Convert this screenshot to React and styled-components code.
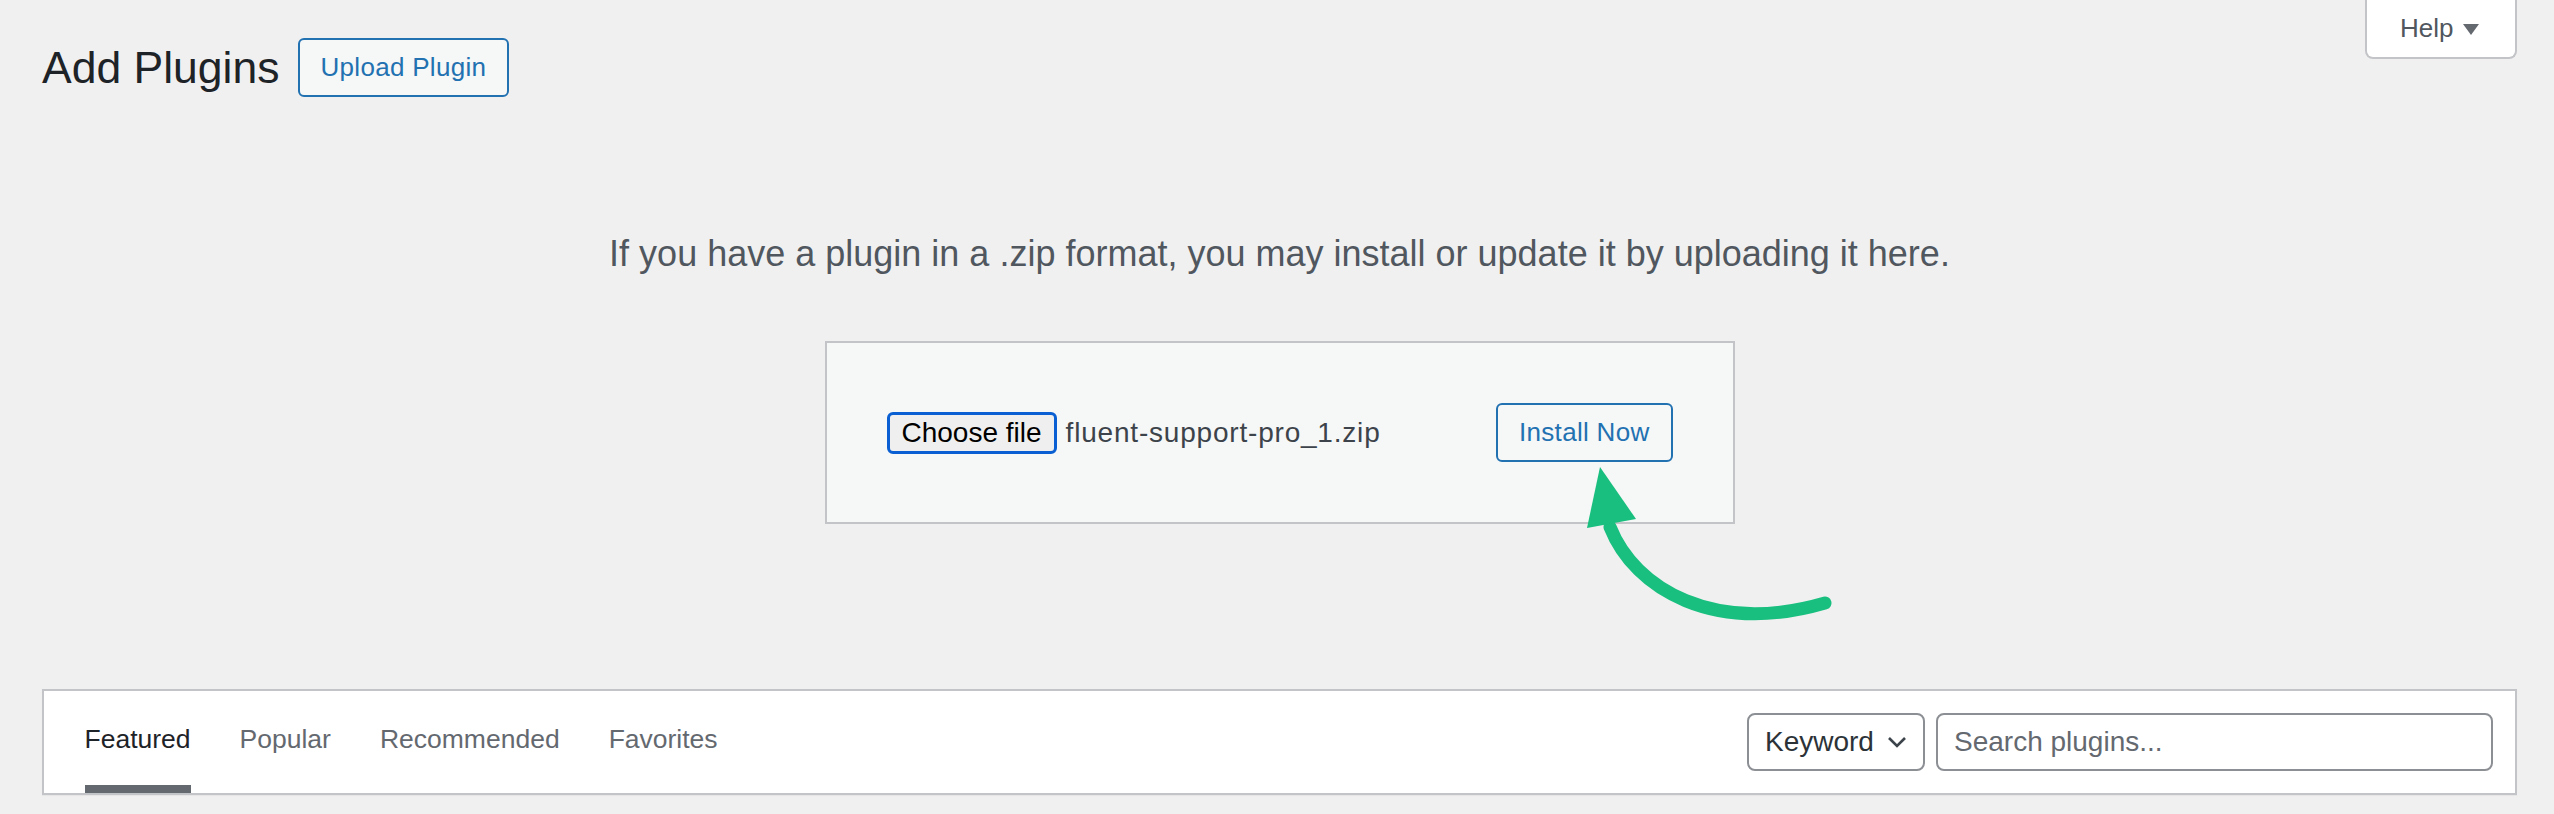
import React from "react";
import styled, { createGlobalStyle } from "styled-components";

const GlobalStyle = createGlobalStyle`
  html, body {
    margin: 0;
    padding: 0;
    background: #f0f0f1;
  }
  body {
    font-family: "Liberation Sans", Arial, sans-serif;
    color: #3c434a;
  }
  * {
    box-sizing: border-box;
  }
`;

const tabs = ["Featured", "Popular", "Recommended", "Favorites"];

export default function App() {
  return (
    <>
      <GlobalStyle />
      <Page>
        <HeaderRow>
          <TitleGroup>
            <Title>Add Plugins</Title>
            <OutlineButton type="button">Upload Plugin</OutlineButton>
          </TitleGroup>
          <HelpTab type="button">
            Help
            <svg width="16" height="11" viewBox="0 0 16 11">
              <polygon points="0,0 16,0 8,11" fill="#646970" />
            </svg>
          </HelpTab>
        </HeaderRow>

        <InstallHelp>
          If you have a plugin in a .zip format, you may install or update it
          by uploading it here.
        </InstallHelp>

        <UploadForm>
          <FileField>
            <ChooseButton type="button">Choose file</ChooseButton>
            <FileName>fluent-support-pro_1.zip</FileName>
          </FileField>
          <OutlineButton type="button" $small>
            Install Now
          </OutlineButton>
        </UploadForm>

        <FilterBar>
          <FilterLinks>
            {tabs.map((t, i) => (
              <FilterLink key={t} $current={i === 0}>
                {t}
              </FilterLink>
            ))}
          </FilterLinks>
          <SearchForm>
            <SelectBox>
              <span>Keyword</span>
              <svg width="20" height="12" viewBox="0 0 20 12">
                <path
                  d="M2 2 L10 10 L18 2"
                  fill="none"
                  stroke="#3c434a"
                  strokeWidth="2.6"
                />
              </svg>
            </SelectBox>
            <SearchInput type="search" placeholder="Search plugins..." />
          </SearchForm>
        </FilterBar>

        {/* green annotation arrow pointing at the install button */}
        <Arrow viewBox="1575 455 265 175" width="265" height="175">
          <path
            d="M1610 527 C1635 590 1715 635 1825 603"
            fill="none"
            stroke="#19bf7e"
            strokeWidth="13"
            strokeLinecap="round"
          />
          <polygon points="1600,467 1587,528 1636,519" fill="#19bf7e" />
        </Arrow>
      </Page>
    </>
  );
}

const Page = styled.div`
  position: relative;
  height: 814px;
  overflow: hidden;
  padding: 0 37px 0 42px;
  display: flex;
  flex-direction: column;
`;

const HeaderRow = styled.div`
  display: flex;
  justify-content: space-between;
  align-items: flex-start;
`;

const TitleGroup = styled.div`
  display: flex;
  align-items: center;
  gap: 18px;
  margin-top: 38px;
`;

const Title = styled.h1`
  margin: 0;
  font-size: 44.5px;
  font-weight: 400;
  line-height: 59px;
  color: #1d2327;
`;

const OutlineButton = styled.button`
  height: 59px;
  padding: 0 21px;
  border: 2px solid #2271b1;
  border-radius: 6px;
  background: #f6f7f7;
  color: #2271b1;
  font-family: inherit;
  font-size: 26px;
  letter-spacing: 0.3px;
  cursor: pointer;
`;

const HelpTab = styled.button`
  display: flex;
  align-items: center;
  gap: 10px;
  height: 59px;
  width: 152px;
  padding: 0 0 0 33px;
  border: 2px solid #c3c4c7;
  border-top: none;
  border-radius: 0 0 8px 8px;
  background: #fff;
  color: #50575e;
  font-family: inherit;
  font-size: 26px;
  cursor: pointer;
  svg {
    margin-top: 1px;
  }
`;

const InstallHelp = styled.p`
  margin: 132px 0 0;
  text-align: center;
  font-size: 36px;
  line-height: 50px;
  color: #50575e;
`;

const UploadForm = styled.div`
  display: flex;
  justify-content: space-between;
  align-items: center;
  width: 910px;
  margin: 62px auto 0;
  padding: 60px;
  border: 2px solid #c3c4c7;
  background: #f6f7f7;
`;

const FileField = styled.div`
  display: flex;
  align-items: center;
`;

const ChooseButton = styled.button`
  height: 42px;
  padding: 0 12px;
  border: 3px solid #0a60d2;
  border-radius: 6px;
  background: #efefef;
  color: #000;
  font-family: inherit;
  font-size: 28px;
  line-height: 1;
`;

const FileName = styled.span`
  margin-left: 9px;
  font-size: 28px;
  letter-spacing: 0.8px;
  color: #3c434a;
`;

const FilterBar = styled.div`
  display: flex;
  justify-content: space-between;
  align-items: center;
  margin-top: 165px;
  padding: 0 22px 0 16px;
  border: 2px solid #c3c4c7;
  background: #fff;
  box-shadow: 0 1px 1px rgba(0, 0, 0, 0.04);
`;

const FilterLinks = styled.ul`
  display: flex;
  margin: 0;
  padding: 0;
  list-style: none;
`;

const FilterLink = styled.li`
  margin: 0 24.5px;
  padding: 30px 0 28px;
  border-bottom: 8px solid ${(p) => (p.$current ? "#646970" : "#fff")};
  font-size: 26.5px;
  line-height: 36px;
  color: ${(p) => (p.$current ? "#1d2327" : "#646970")};
  cursor: pointer;
`;

const SearchForm = styled.div`
  display: flex;
  align-items: center;
  gap: 11px;
`;

const SelectBox = styled.div`
  display: flex;
  align-items: center;
  justify-content: space-between;
  flex-shrink: 0;
  width: 178px;
  height: 58px;
  padding: 0 16px 0 16px;
  border: 2px solid #8c8f94;
  border-radius: 8px;
  background: #fff;
  font-size: 28px;
  color: #2c3338;
`;

const SearchInput = styled.input`
  flex-shrink: 0;
  width: 557px;
  height: 58px;
  padding: 0 16px;
  border: 2px solid #8c8f94;
  border-radius: 8px;
  background: #fff;
  font-family: inherit;
  font-size: 28px;
  color: #2c3338;
  outline: none;
  &::placeholder {
    color: #646970;
  }
`;

const Arrow = styled.svg`
  position: absolute;
  left: 1575px;
  top: 455px;
  pointer-events: none;
`;
